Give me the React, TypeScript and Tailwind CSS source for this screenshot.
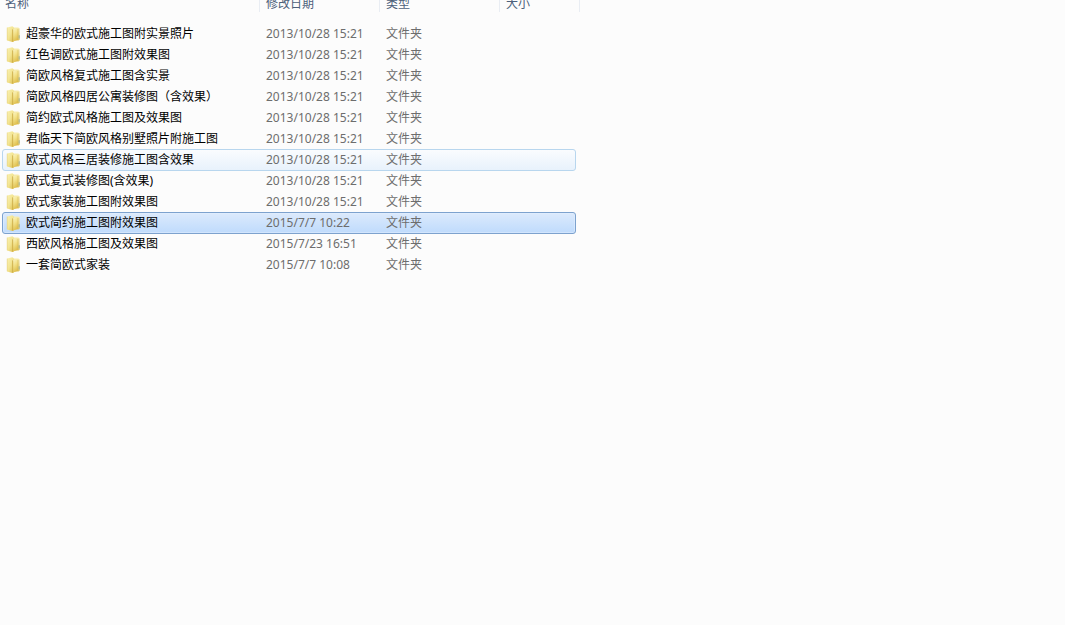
type RowState = 'normal' | 'hover' | 'selected';

interface Entry {
  name: string;
  date: string;
  state?: RowState;
}

const entries: Entry[] = [
  { name: '超豪华的欧式施工图附实景照片', date: '2013/10/28 15:21' },
  { name: '红色调欧式施工图附效果图', date: '2013/10/28 15:21' },
  { name: '简欧风格复式施工图含实景', date: '2013/10/28 15:21' },
  { name: '简欧风格四居公寓装修图（含效果）', date: '2013/10/28 15:21' },
  { name: '简约欧式风格施工图及效果图', date: '2013/10/28 15:21' },
  { name: '君临天下简欧风格别墅照片附施工图', date: '2013/10/28 15:21' },
  { name: '欧式风格三居装修施工图含效果', date: '2013/10/28 15:21', state: 'hover' },
  { name: '欧式复式装修图(含效果)', date: '2013/10/28 15:21' },
  { name: '欧式家装施工图附效果图', date: '2013/10/28 15:21' },
  { name: '欧式简约施工图附效果图', date: '2015/7/7 10:22', state: 'selected' },
  { name: '西欧风格施工图及效果图', date: '2015/7/23 16:51' },
  { name: '一套简欧式家装', date: '2015/7/7 10:08' },
];

const headers = ['名称', '修改日期', '类型', '大小'];

const rowStyles: Record<RowState, string> = {
  normal: 'border-transparent',
  hover: 'border-[#b8d6ee] bg-linear-to-b from-[#fafcfe] to-[#e8f2fc]',
  selected:
    'relative border-[#7da2ce] bg-linear-to-b from-[#dceafc] to-[#bfdbfc] shadow-[inset_0_0_0_1px_#e4effd80]',
};

function FolderIcon() {
  return (
    <svg className="h-4 w-4 shrink-0" viewBox="0 0 16 16" aria-hidden="true">
      <defs>
        <linearGradient id="folder-cover" x1="0" y1="0" x2="1" y2="1">
          <stop offset="0" stopColor="#faf2b6" />
          <stop offset="0.5" stopColor="#f3e592" />
          <stop offset="1" stopColor="#dcbc4c" />
        </linearGradient>
        <linearGradient id="folder-front" x1="0" y1="0" x2="0.4" y2="1">
          <stop offset="0" stopColor="#fcf7cb" />
          <stop offset="0.5" stopColor="#f3e28a" />
          <stop offset="1" stopColor="#dfbf4e" />
        </linearGradient>
        <linearGradient id="folder-back" x1="0" y1="0" x2="0" y2="1">
          <stop offset="0" stopColor="#f6ebaf" />
          <stop offset="1" stopColor="#dfc667" />
        </linearGradient>
      </defs>
      <path d="M7 1.6h5.3l1.4.9v11.2l-1.2.9H7z" fill="url(#folder-back)" />
      <path d="M12.6 9.2h1.1v3.4h-1.1z" fill="#9fb39b" />
      <path d="M1 1.5 6.4.3l1.3.9v14.2l-1.3.5L1 14.4z" fill="url(#folder-cover)" />
      <path d="M1.2 1.6v12.7" stroke="#e0cb74" strokeWidth=".5" />
      <path d="M7 3.2 10.7 2l1.3.8v11L7.2 15.6l-.8.3z" fill="url(#folder-front)" />
      <path d="M6.7 3.4v12.2" stroke="#c7a43e" strokeWidth=".8" />
      <path d="M12 3v10.8" stroke="#d3b550" strokeWidth=".5" />
    </svg>
  );
}

const columns = 'grid grid-cols-[257px_120px_120px_minmax(0,1fr)]';

export default function App() {
  return (
    <main className="flow-root min-h-screen bg-[#fcfcfc] text-xs leading-4 font-['Noto_Sans','Noto_Sans_CJK_SC',sans-serif]">
      <table className="-mt-1 block w-full max-w-[580px]">
        <thead className="block">
          <tr className={`${columns} pl-[3px] text-[#4c607a]`}>
            {headers.map((label) => (
              <th
                key={label}
                scope="col"
                className="border-r border-[#e9edf3] pl-[6px] text-left font-normal first:pl-[2px]"
              >
                {label}
              </th>
            ))}
          </tr>
        </thead>
        <tbody className="block pt-[11px] pr-1 pl-[2px]">
          {entries.map(({ name, date, state = 'normal' }) => (
            <tr
              key={name}
              aria-selected={state === 'selected'}
              className={`${columns} -mb-px h-[22px] items-center rounded-[3px] border ${rowStyles[state]}`}
            >
              <td className="flex items-center gap-1 pl-[3px] whitespace-nowrap text-black">
                <FolderIcon />
                {name}
              </td>
              <td className="pl-[6px] whitespace-nowrap text-[#6d6d6d]">{date}</td>
              <td className="pl-[6px] whitespace-nowrap text-[#6d6d6d]">文件夹</td>
              <td />
            </tr>
          ))}
        </tbody>
      </table>
    </main>
  );
}
